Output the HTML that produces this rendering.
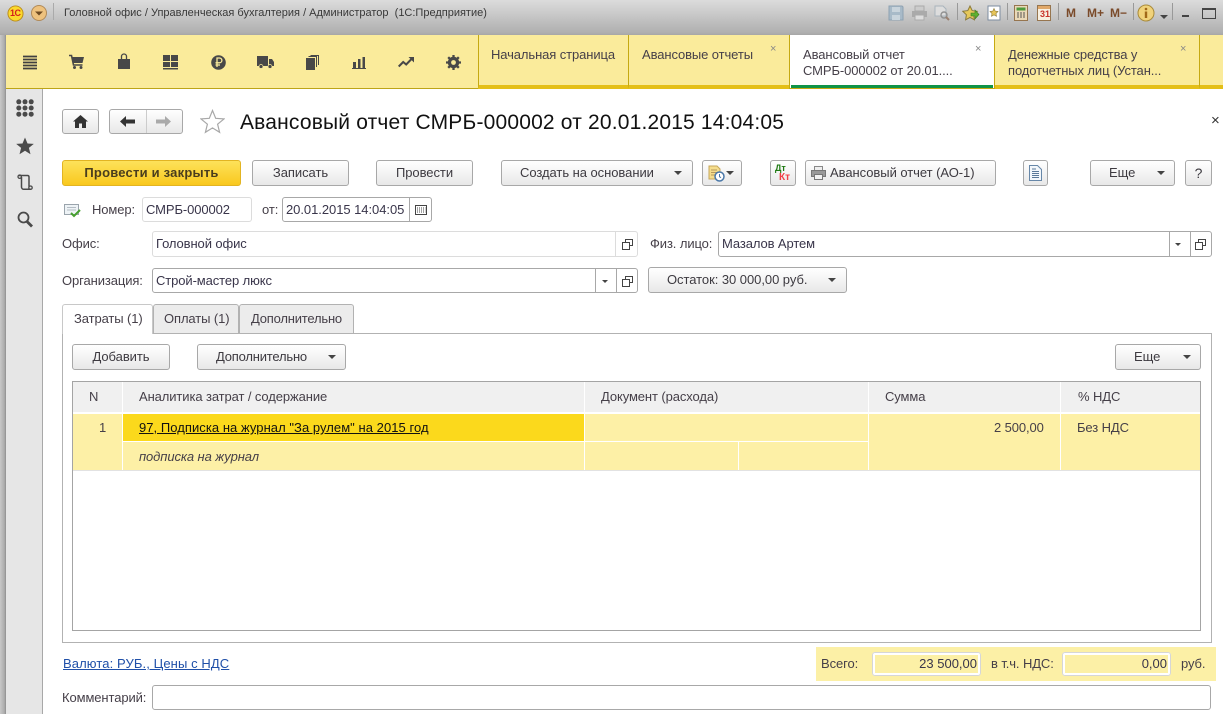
<!DOCTYPE html>
<html lang="ru"><head><meta charset="utf-8"><title>Авансовый отчет</title>
<style>
html,body{margin:0;padding:0;width:1223px;height:714px;overflow:hidden;background:#fff}
body{position:relative;font:13px "Liberation Sans",Arial,sans-serif;color:#453f48}
.a,.t,.b,.i,svg{position:absolute}
.t{white-space:nowrap;line-height:14px;letter-spacing:-.1px}
.b{box-sizing:border-box;border:1px solid #a8a8a8;border-radius:3px;background:linear-gradient(#fff,#e8e8e8);text-align:center;line-height:24px;white-space:nowrap;letter-spacing:-.05px;color:#3d3a40}
.i{box-sizing:border-box;border:1px solid #a8a8a8;border-radius:3px;background:#fff;line-height:23px;padding-left:3px;white-space:nowrap;letter-spacing:-.1px;color:#39354a}
.l{border-color:#dcdcdc}
.v{position:absolute;top:0;bottom:0;width:1px;background:#a8a8a8}
.arr{position:absolute;width:0;height:0;border-left:4px solid transparent;border-right:4px solid transparent;border-top:4px solid #444}
.tab{position:absolute;top:35px;height:54px;box-sizing:border-box;background:#faeb9b;border-left:1px solid #c5a912;border-bottom:4px solid #e4bf18}
.x{position:absolute;color:#888;font-size:11px;line-height:11px}
</style></head><body>

<!-- window chrome -->
<div class="a" style="left:0;top:0;width:1223px;height:35px;background:linear-gradient(#dcdcdc,#c9c9c9 40%,#b0b0b0 92%,#a6a6a6)"></div>
<div class="a" style="left:0;top:35px;width:6px;height:679px;background:linear-gradient(90deg,#c8c8c8,#aeaeae 70%,#8e8e8e)"></div>

<svg style="left:7px;top:5px" width="17" height="17" viewBox="0 0 18 18"><circle cx="9" cy="9" r="8" fill="#fbd92c" stroke="#b98a1a"/></svg>
<div class="t" style="left:10px;top:7px;color:#d3201c;font:bold 9px/12px 'Liberation Sans',sans-serif;letter-spacing:-.5px">1С</div>
<svg style="left:31px;top:5px" width="16" height="16" viewBox="0 0 16 16"><circle cx="8" cy="8" r="7.500" fill="#eec27e" stroke="#b18a58"/><path d="M4 6.500h8L8 10.500z" fill="#6d4a22"/></svg>
<div class="a" style="left:53px;top:3px;width:1px;height:17px;background:#aaa"></div>
<div class="t" style="left:64px;top:6px;font-size:11px;color:#383838;letter-spacing:0">Головной офис / Управленческая бухгалтерия / Администратор&nbsp; (1С:Предприятие)</div>

<!-- title bar right icons -->
<svg style="left:888px;top:5px" width="16" height="16" viewBox="0 0 16 16"><path d="M1 1h13l1 1v13H1z" fill="#a8bac8" stroke="#8ea2b2"/><path d="M4 2h8v5H4zM4 10h8v5H4z" fill="#c9d4dc"/></svg>
<svg style="left:911px;top:5px" width="17" height="16" viewBox="0 0 17 16"><path d="M4 1h9v5H4z" fill="#ccc" stroke="#aaa"/><path d="M1 6h15v6H1z" fill="#aaa"/><path d="M4 10h9v5H4z" fill="#ddd" stroke="#aaa"/></svg>
<svg style="left:934px;top:5px" width="16" height="16" viewBox="0 0 16 16"><path d="M1 1h8l3 3v7H1z" fill="#ddd" stroke="#a9b4bc"/><circle cx="10" cy="10" r="3" fill="none" stroke="#909090" stroke-width="1.400"/><path d="M12 12l3 3" stroke="#9a8070" stroke-width="2"/></svg>
<div class="a" style="left:957px;top:3px;width:1px;height:17px;background:#999"></div>
<svg style="left:962px;top:5px" width="18" height="17" viewBox="0 0 18 17"><path d="M8 1l2.200 4.600 5 .7-3.600 3.500.8 5L8 12.400l-4.400 2.400.8-5L.8 6.300l5-.7z" fill="#e6c85a" stroke="#8b7a3a"/><path d="M9 8h4V5l4 4.500-4 4.500v-3H9z" fill="#60b030" stroke="#3a7a1a" stroke-width=".6"/></svg>
<svg style="left:987px;top:5px" width="14" height="16" viewBox="0 0 14 16"><path d="M1 1h12v14H1z" fill="#fff" stroke="#7c8ca0"/><path d="M7 3.500l1.200 2.600 2.800.4-2 2 .5 2.800L7 9.900l-2.500 1.400.5-2.800-2-2 2.800-.4z" fill="#e8c65a" stroke="#8b7a3a" stroke-width=".6"/></svg>
<div class="a" style="left:1007px;top:3px;width:1px;height:17px;background:#999"></div>
<svg style="left:1014px;top:5px" width="14" height="16" viewBox="0 0 14 16"><rect x=".5" y=".5" width="13" height="15" fill="#ead9b8" stroke="#96754f"/><rect x="2.500" y="2.500" width="9" height="3" fill="#4e9a3d"/><path d="M3 8h2M6 8h2M9 8h2M3 10h2M6 10h2M9 10h2M3 12h2M6 12h2M9 12h2" stroke="#555"/></svg>
<svg style="left:1037px;top:5px" width="14" height="16" viewBox="0 0 14 16"><rect x=".5" y=".5" width="13" height="15" fill="#f8f0e2" stroke="#96754f"/><rect x="1" y="1" width="12" height="3" fill="#e0a86a"/></svg>
<div class="t" style="left:1040px;top:9px;font:bold 9px/11px 'Liberation Sans',sans-serif;color:#c8342c;letter-spacing:0">31</div>
<div class="a" style="left:1058px;top:3px;width:1px;height:17px;background:#999"></div>
<div class="t" style="left:1066px;top:6px;font:bold 12px/14px 'Liberation Sans',sans-serif;color:#7a4a2a;letter-spacing:0">M</div>
<div class="t" style="left:1087px;top:6px;font:bold 12px/14px 'Liberation Sans',sans-serif;color:#7a4a2a;letter-spacing:0">M+</div>
<div class="t" style="left:1110px;top:6px;font:bold 12px/14px 'Liberation Sans',sans-serif;color:#7a4a2a;letter-spacing:0">M−</div>
<div class="a" style="left:1133px;top:3px;width:1px;height:17px;background:#999"></div>
<svg style="left:1137px;top:4px" width="18" height="18" viewBox="0 0 18 18"><circle cx="9" cy="9" r="8" fill="#f0d27a" stroke="#a88a3a"/><circle cx="9" cy="5" r="1.300" fill="#a06818"/><rect x="7.800" y="7.500" width="2.400" height="6.500" fill="#a06818"/></svg>
<div class="arr" style="left:1160px;top:15px"></div>
<div class="a" style="left:1172px;top:3px;width:1px;height:17px;background:#999"></div>
<div class="a" style="left:1182px;top:15px;width:7px;height:2px;background:#444"></div>
<div class="a" style="left:1202px;top:8px;width:12px;height:8px;border:1px solid #444;border-top-width:2px"></div>

<!-- yellow section panel -->
<div class="a" style="left:6px;top:35px;width:1217px;height:53px;background:#faeb9b;border-bottom:1px solid #bda516"></div>
<svg style="left:22px;top:54px" width="16" height="16" viewBox="0 0 16 16"><path d="M1 2.500h14M1 5.500h14M1 8.500h14M1 11.500h14M1 14.500h14" stroke="#404040" stroke-width="1.700" fill="none"/></svg>
<svg style="left:68px;top:54px" width="17" height="16" viewBox="0 0 17 16"><path d="M1 1.500h2.500L5.500 11h9" fill="none" stroke="#484848" stroke-width="1.600"/><path d="M4 3h12l-1.500 6H5z" fill="#484848"/><circle cx="6.500" cy="13.500" r="1.500" fill="#484848"/><circle cx="13" cy="13.500" r="1.500" fill="#484848"/></svg>
<svg style="left:117px;top:53px" width="14" height="17" viewBox="0 0 14 17"><path d="M1 6h12v10H1z" fill="#484848"/><path d="M4.500 8V3.500a2.500 2.500 0 0 1 5 0V8" fill="none" stroke="#484848" stroke-width="1.300"/></svg>
<svg style="left:163px;top:55px" width="15" height="15" viewBox="0 0 15 15"><path d="M0 0h7v6H0zM8 0h7v6H8zM0 7h7v5H0zM8 7h7v5H8zM0 13h15v1.500H0z" fill="#484848"/></svg>
<svg style="left:211px;top:55px" width="15" height="15" viewBox="0 0 15 15"><circle cx="7.500" cy="7.500" r="7.300" fill="#484848"/><path d="M6 12V3h2.500a2.300 2.300 0 0 1 0 4.800H4.500M4.500 10h4.500" fill="none" stroke="#faeb9b" stroke-width="1.300"/></svg>
<svg style="left:257px;top:56px" width="17" height="13" viewBox="0 0 17 13"><path d="M0 0h11v10H0zM12 3h3l2 3v4h-5z" fill="#484848"/><circle cx="4" cy="10.500" r="2" fill="#484848" stroke="#faeb9b" stroke-width=".7"/><circle cx="13" cy="10.500" r="2" fill="#484848" stroke="#faeb9b" stroke-width=".7"/></svg>
<svg style="left:306px;top:55px" width="13" height="15" viewBox="0 0 13 15"><path d="M0 3h9v12H0z" fill="#484848"/><path d="M2.500 1.500H10.500V12M4.500.5H12.500V10" fill="none" stroke="#484848"/></svg>
<svg style="left:352px;top:57px" width="14" height="12" viewBox="0 0 14 12"><path d="M1 5h3v6H1zM6 2h2.500v9H6zM10.500 0H13v11h-2.500z" fill="#484848"/><path d="M0 11.500h14" stroke="#484848"/></svg>
<svg style="left:398px;top:57px" width="16" height="11" viewBox="0 0 16 11"><path d="M.7 9.500l4.500-4.500 3 2.500L14 1.500" fill="none" stroke="#484848" stroke-width="2"/><path d="M10.500 0H16v5.500z" fill="#484848"/></svg>
<svg style="left:446px;top:55px" width="15" height="15" viewBox="0 0 15 15"><circle cx="7.500" cy="7.500" r="4.300" fill="none" stroke="#484848" stroke-width="2.800"/><path d="M7.500 0v15M0 7.500h15M2.200 2.200l10.600 10.600M12.800 2.200L2.200 12.800" stroke="#484848" stroke-width="2.300"/><circle cx="7.500" cy="7.500" r="2.400" fill="#faeb9b"/></svg>

<!-- tabs -->
<div class="tab" style="left:478px;width:150px"></div>
<div class="t" style="left:491px;top:48px">Начальная страница</div>
<div class="tab" style="left:628px;width:161px"></div>
<div class="t" style="left:642px;top:48px">Авансовые отчеты</div>
<div class="x" style="left:770px;top:44px">×</div>
<div class="a" style="left:789px;top:35px;width:206px;height:54px;background:#fff;border-left:1px solid #c5a912;border-right:1px solid #c5a912;box-sizing:border-box"></div>
<div class="a" style="left:791px;top:85px;width:202px;height:3px;background:#0f9347"></div>
<div class="a" style="left:790px;top:88px;width:204px;height:1px;background:#c5a912"></div>
<div class="t" style="left:803px;top:48px">Авансовый отчет</div>
<div class="t" style="left:803px;top:64px">СМРБ-000002 от 20.01....</div>
<div class="x" style="left:975px;top:44px">×</div>
<div class="tab" style="left:995px;width:204px;border-left:0"></div>
<div class="t" style="left:1008px;top:48px">Денежные средства у</div>
<div class="t" style="left:1008px;top:64px">подотчетных лиц (Устан...</div>
<div class="x" style="left:1180px;top:44px">×</div>
<div class="tab" style="left:1199px;width:24px"></div>

<!-- sidebar -->
<div class="a" style="left:6px;top:89px;width:36px;height:625px;background:#e6e6e6;border-right:1px solid #a8a8a8"></div>
<svg style="left:16px;top:99px" width="18" height="18" viewBox="0 0 18 18" fill="#4a4a4a"><circle cx="2.800" cy="2.800" r="2.500"/><circle cx="9" cy="2.800" r="2.500"/><circle cx="15.200" cy="2.800" r="2.500"/><circle cx="2.800" cy="9" r="2.500"/><circle cx="9" cy="9" r="2.500"/><circle cx="15.200" cy="9" r="2.500"/><circle cx="2.800" cy="15.200" r="2.500"/><circle cx="9" cy="15.200" r="2.500"/><circle cx="15.200" cy="15.200" r="2.500"/></svg>
<svg style="left:16px;top:137px" width="18" height="18" viewBox="0 0 18 18"><path d="M9 .5l2.500 6 6.300.4-4.900 4 1.600 6.300L9 13.800l-5.500 3.400 1.600-6.300-4.900-4 6.300-.4z" fill="#4a4a4a"/></svg>
<svg style="left:17px;top:174px" width="17" height="17" viewBox="0 0 17 17"><path d="M2 1.500h8.500c1 0 1.500.7 1.500 1.500v9.500M4.500 3v10c0 1.200 1 2.300 2.300 2.300H14" fill="none" stroke="#4a4a4a" stroke-width="1.500"/><circle cx="2.700" cy="2.700" r="1.700" fill="none" stroke="#4a4a4a" stroke-width="1.300"/><circle cx="13.500" cy="13.700" r="1.700" fill="none" stroke="#4a4a4a" stroke-width="1.300"/></svg>
<svg style="left:17px;top:211px" width="16" height="17" viewBox="0 0 16 17"><circle cx="6.500" cy="6.500" r="5" fill="none" stroke="#4a4a4a" stroke-width="1.800"/><path d="M10 10.500l5 5" stroke="#4a4a4a" stroke-width="2.800"/></svg>

<!-- header -->
<div class="b" style="left:62px;top:109px;width:37px;height:25px"></div>
<svg style="left:73px;top:115px" width="15" height="13" viewBox="0 0 15 13"><path d="M7.500 0L15 6.500h-2V13H9V8.500H6V13H2V6.500H0z" fill="#333"/></svg>
<div class="b" style="left:109px;top:109px;width:74px;height:25px"><div class="v" style="left:36px;background:#ccc"></div></div>
<svg style="left:120px;top:116px" width="15" height="11" viewBox="0 0 15 11"><path d="M6 0v3.500h9v4H6V11L0 5.500z" fill="#333"/></svg>
<svg style="left:156px;top:116px" width="15" height="11" viewBox="0 0 15 11"><path d="M9 0v3.500H0v4h9V11l6-5.500z" fill="#aaa"/></svg>
<svg style="left:200px;top:109px" width="25" height="25" viewBox="0 0 25 25"><path d="M12.500 1.500l3.200 7.800 8.300.6-6.400 5.300 2 8.100-7.100-4.400-7.100 4.400 2-8.100L1 9.900l8.300-.6z" fill="#fff" stroke="#a8a8a8" stroke-width="1.200"/></svg>
<div class="t" style="left:240px;top:111px;font-size:21px;line-height:24px;color:#111;letter-spacing:.18px">Авансовый отчет СМРБ-000002 от 20.01.2015 14:04:05</div>
<div class="t" style="left:1211px;top:114px;font-size:15px;color:#333;letter-spacing:0">×</div>

<!-- command bar -->
<div class="b" style="left:62px;top:160px;width:179px;height:26px;background:linear-gradient(#fde25a,#f9c81e);border-color:#e2b422;font-weight:bold;color:#4a3d1d;letter-spacing:.22px">Провести и закрыть</div>
<div class="b" style="left:252px;top:160px;width:97px;height:26px">Записать</div>
<div class="b" style="left:376px;top:160px;width:97px;height:26px">Провести</div>
<div class="b" style="left:501px;top:160px;width:192px;height:26px;text-align:left;padding-left:18px">Создать на основании<div class="arr" style="left:172px;top:10px"></div></div>
<div class="b" style="left:702px;top:160px;width:40px;height:26px"></div>
<svg style="left:708px;top:165px" width="17" height="17" viewBox="0 0 17 17"><path d="M1 1h8l3 3v10H1z" fill="#f5dd8c" stroke="#c6a75a"/><path d="M3 5h6M3 7.500h6M3 10h4" stroke="#b8995a"/><circle cx="11.500" cy="11.500" r="4.500" fill="#fff" stroke="#4a78a8" stroke-width="1.500"/><path d="M11.500 9v2.700l1.500 1" stroke="#4a78a8" fill="none"/></svg>
<div class="arr" style="left:726px;top:171px"></div>
<div class="b" style="left:770px;top:160px;width:26px;height:26px"></div>
<div class="t" style="left:775px;top:163px;font:bold 9px/10px 'Liberation Sans',sans-serif;color:#1f7a12;letter-spacing:0">Дт</div>
<div class="t" style="left:779px;top:173px;font:bold 10px/10px 'Liberation Sans',sans-serif;color:#f23f45;letter-spacing:0">Кт</div>
<div class="b" style="left:805px;top:160px;width:191px;height:26px;text-align:left;padding-left:24px">Авансовый отчет (АО-1)</div>
<svg style="left:811px;top:166px" width="15" height="14" viewBox="0 0 15 14"><path d="M3.500.5h8v4h-8z" fill="#eee" stroke="#888"/><path d="M.5 4.500h14v6H.5z" fill="#999" stroke="#777"/><path d="M3.500 8.500h8v5h-8z" fill="#f2f2f2" stroke="#777"/></svg>
<div class="b" style="left:1023px;top:160px;width:25px;height:26px"></div>
<svg style="left:1029px;top:165px" width="13" height="16" viewBox="0 0 13 16"><path d="M.5.500h8l4 4v11H.5z" fill="#f3f7fb" stroke="#6787a8"/><path d="M3 4h4M3 6.500h7M3 8.500h7M3 10.500h7M3 12.500h7" stroke="#5a7898"/></svg>
<div class="b" style="left:1090px;top:160px;width:85px;height:26px;text-align:left;padding-left:18px">Еще<div class="arr" style="left:66px;top:10px"></div></div>
<div class="b" style="left:1185px;top:160px;width:27px;height:26px;font-size:14px">?</div>

<!-- fields -->
<svg style="left:64px;top:204px" width="17" height="14" viewBox="0 0 17 14"><path d="M.5.500h14v10H.5z" fill="#eef3f6" stroke="#9aa4ac"/><path d="M3 3.500h9M3 6h9" stroke="#b4bcc4"/><path d="M7 9l3 3 6-6" fill="none" stroke="#46a02e" stroke-width="2"/></svg>
<div class="t" style="left:92px;top:203px">Номер:</div>
<div class="i l" style="left:142px;top:197px;width:110px;height:25px">СМРБ-000002</div>
<div class="t" style="left:262px;top:203px">от:</div>
<div class="i" style="left:282px;top:197px;width:150px;height:25px;letter-spacing:-.05px">20.01.2015 14:04:05<div class="v" style="left:126px"></div></div>
<svg style="left:415px;top:205px" width="12" height="10" viewBox="0 0 12 10"><path d="M.5.500h11v9H.5z" fill="none" stroke="#444"/><path d="M2 3h1M4 3h1M6 3h1M8 3h1M10 3h.5M2 5h1M4 5h1M6 5h1M8 5h1M10 5h.5M2 7h1M4 7h1M6 7h1M8 7h1M10 7h.5" stroke="#444"/></svg>

<div class="t" style="left:62px;top:237px">Офис:</div>
<div class="i l" style="left:152px;top:231px;width:486px;height:26px;line-height:24px">Головной офис<div class="v" style="left:462px;background:#dcdcdc"></div></div>
<svg style="left:622px;top:239px" width="11" height="11" viewBox="0 0 11 11"><path d="M3.500 3.500V.5h7v6h-3M.5 3.500h7v7h-7z" fill="none" stroke="#444"/></svg>
<div class="t" style="left:650px;top:237px">Физ. лицо:</div>
<div class="i" style="left:718px;top:231px;width:494px;height:26px;line-height:24px">Мазалов Артем<div class="v" style="left:450px"></div><div class="v" style="left:471px"></div><div class="arr" style="left:456px;top:11px;border-width:3px 3px 0"></div></div>
<svg style="left:1195px;top:239px" width="11" height="11" viewBox="0 0 11 11"><path d="M3.500 3.500V.5h7v6h-3M.5 3.500h7v7h-7z" fill="none" stroke="#444"/></svg>

<div class="t" style="left:62px;top:274px">Организация:</div>
<div class="i" style="left:152px;top:268px;width:486px;height:25px">Строй-мастер люкс<div class="v" style="left:442px"></div><div class="v" style="left:463px"></div><div class="arr" style="left:449px;top:11px;border-width:3px 3px 0"></div></div>
<svg style="left:622px;top:276px" width="11" height="11" viewBox="0 0 11 11"><path d="M3.500 3.500V.5h7v6h-3M.5 3.500h7v7h-7z" fill="none" stroke="#444"/></svg>
<div class="b" style="left:648px;top:267px;width:199px;height:26px;text-align:left;padding-left:18px">Остаток: 30 000,00 руб.<div class="arr" style="left:179px;top:10px"></div></div>

<!-- tab panel -->
<div class="a" style="left:62px;top:333px;width:1150px;height:310px;box-sizing:border-box;border:1px solid #b2b2b2"></div>
<div class="a" style="left:153px;top:304px;width:86px;height:29px;box-sizing:border-box;background:#ececec;border:1px solid #b2b2b2;border-bottom:0;border-radius:3px 3px 0 0"></div>
<div class="a" style="left:239px;top:304px;width:115px;height:29px;box-sizing:border-box;background:#ececec;border:1px solid #b2b2b2;border-bottom:0;border-radius:3px 3px 0 0"></div>
<div class="a" style="left:62px;top:304px;width:91px;height:30px;box-sizing:border-box;background:#fff;border:1px solid #c8c8c8;border-bottom:0;border-radius:3px 3px 0 0"></div>
<div class="t" style="left:74px;top:312px">Затраты (1)</div>
<div class="t" style="left:164px;top:312px">Оплаты (1)</div>
<div class="t" style="left:251px;top:312px;letter-spacing:-.2px">Дополнительно</div>

<div class="b" style="left:72px;top:344px;width:98px;height:26px">Добавить</div>
<div class="b" style="left:197px;top:344px;width:149px;height:26px;text-align:left;padding-left:18px;letter-spacing:-.2px">Дополнительно<div class="arr" style="left:130px;top:10px"></div></div>
<div class="b" style="left:1115px;top:344px;width:86px;height:26px;text-align:left;padding-left:18px">Еще<div class="arr" style="left:67px;top:10px"></div></div>

<!-- table -->
<div class="a" style="left:72px;top:381px;width:1129px;height:250px;box-sizing:border-box;border:1px solid #a4a4a4"></div>
<div class="a" style="left:73px;top:382px;width:1127px;height:30px;background:#f0f0f0"></div>
<div class="a" style="left:73px;top:414px;width:1127px;height:56px;background:#fdf0a6"></div>
<div class="a" style="left:73px;top:470px;width:1127px;height:1px;background:#e2e2e2"></div>
<div class="a" style="left:123px;top:414px;width:461px;height:27px;background:#fbd91c"></div>
<div class="a" style="left:122px;top:382px;width:1px;height:88px;background:#fff"></div>
<div class="a" style="left:584px;top:382px;width:1px;height:88px;background:#fff"></div>
<div class="a" style="left:868px;top:382px;width:1px;height:88px;background:#fff"></div>
<div class="a" style="left:1060px;top:382px;width:1px;height:88px;background:#fff"></div>
<div class="a" style="left:738px;top:442px;width:1px;height:28px;background:#fff"></div>
<div class="a" style="left:123px;top:441px;width:745px;height:1px;background:#fff"></div>
<div class="t" style="left:89px;top:390px">N</div>
<div class="t" style="left:139px;top:390px">Аналитика затрат / содержание</div>
<div class="t" style="left:601px;top:390px">Документ (расхода)</div>
<div class="t" style="left:885px;top:390px">Сумма</div>
<div class="t" style="left:1078px;top:390px">% НДС</div>
<div class="t" style="left:99px;top:421px">1</div>
<div class="t" style="left:139px;top:421px;color:#111;text-decoration:underline;letter-spacing:.05px">97, Подписка на журнал "За рулем" на 2015 год</div>
<div class="t" style="left:139px;top:450px;font-style:italic">подписка на журнал</div>
<div class="t" style="left:994px;top:421px">2 500,00</div>
<div class="t" style="left:1077px;top:421px">Без НДС</div>

<!-- footer -->
<div class="t" style="left:63px;top:657px;color:#1f4fa8;text-decoration:underline;letter-spacing:.1px">Валюта: РУБ., Цены с НДС</div>
<div class="a" style="left:816px;top:647px;width:400px;height:34px;background:#fcf0a6"></div>
<div class="t" style="left:821px;top:657px">Всего:</div>
<div class="a" style="left:872px;top:652px;width:109px;height:24px;box-sizing:border-box;background:#fcf0a6;border:3px solid #fff;outline:1px solid #d6d6d6;outline-offset:-1px;border-radius:3px"></div>
<div class="t" style="left:910px;top:657px;width:67px;text-align:right;letter-spacing:0;color:#39354a">23 500,00</div>
<div class="t" style="left:991px;top:657px">в т.ч. НДС:</div>
<div class="a" style="left:1062px;top:652px;width:109px;height:24px;box-sizing:border-box;background:#fcf0a6;border:3px solid #fff;outline:1px solid #d6d6d6;outline-offset:-1px;border-radius:3px"></div>
<div class="t" style="left:1130px;top:657px;width:37px;text-align:right;letter-spacing:0;color:#39354a">0,00</div>
<div class="t" style="left:1181px;top:657px">руб.</div>
<div class="t" style="left:62px;top:691px">Комментарий:</div>
<div class="i" style="left:152px;top:685px;width:1059px;height:25px"></div>
</body></html>
